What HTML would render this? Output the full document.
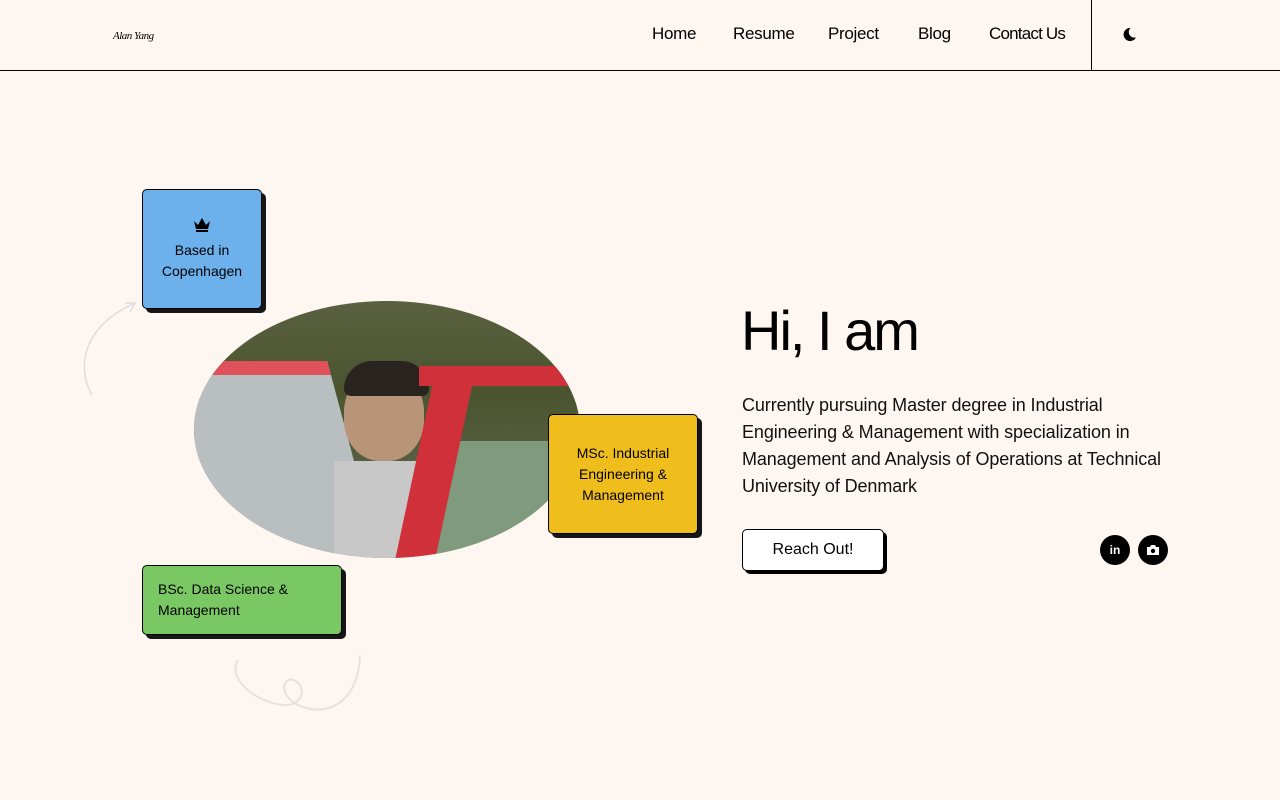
<!DOCTYPE html>
<html><head><meta charset="utf-8"><style>
*{margin:0;padding:0;box-sizing:border-box}
body{width:1280px;height:800px;background:#fdf6f1;font-family:"Liberation Sans",sans-serif;color:#000;position:relative;overflow:hidden}
.nav{position:absolute;top:0;left:0;width:1280px;height:71px;border-bottom:1px solid #000}
.logo{position:absolute;left:113px;top:30px;font-family:"Liberation Serif",serif;font-style:italic;font-size:11px;letter-spacing:-0.5px}
.nav a{position:absolute;top:24px;font-size:17px;color:#000;text-decoration:none;letter-spacing:-0.3px}
.vline{position:absolute;left:1091px;top:0;width:1px;height:70px;background:#000}
.card{position:absolute;border:1px solid #000;border-radius:5px;box-shadow:4px 4px 0 #161616;font-size:14px;line-height:21px;text-align:center}
h1{position:absolute;left:741px;top:298px;font-weight:400;font-size:56px;letter-spacing:-2px}
p.d{position:absolute;left:742px;top:392px;width:440px;font-size:18px;line-height:27px;color:#111;letter-spacing:-0.1px}
.btn{position:absolute;left:742px;top:529px;width:142px;height:42px;border:1px solid #000;border-radius:5px;box-shadow:3px 3px 0 #000;background:#fff;font-size:16px;text-align:center;line-height:40px}
.ic{position:absolute;top:535px;width:30px;height:30px;border-radius:50%;background:#000;color:#fff;font-size:12px;font-weight:bold;text-align:center;line-height:30px}
</style></head><body>
<div class="nav">
<div class="logo">Alan Yang</div>
<a style="left:652px">Home</a><a style="left:733px">Resume</a><a style="left:828px">Project</a><a style="left:918px">Blog</a><a style="left:989px;letter-spacing:-0.8px">Contact Us</a>
<div class="vline"></div>
<svg style="position:absolute;left:1122px;top:27px" width="15" height="15" viewBox="0 0 16 16"><path d="M9 1a7 7 0 1 0 6 10A6 6 0 0 1 9 1z" fill="#000"/></svg>
</div>
<svg style="position:absolute;left:80px;top:295px" width="70" height="110"><path d="M12 100C-5 70 5 30 55 8M45 8l10 0-5 9" stroke="#ddd" fill="none" stroke-width="1.5"/></svg>
<svg style="position:absolute;left:228px;top:655px" width="140" height="60"><path d="M10 5C0 20 20 45 55 50 75 52 80 30 65 25 55 22 50 40 70 50 95 62 130 52 132 0" stroke="#e6e2de" fill="none" stroke-width="2"/></svg>
<div style="position:absolute;left:194px;top:301px;width:386px;height:257px;border-radius:50%;overflow:hidden;background:linear-gradient(180deg,#5a6040 0%,#4a5530 35%,#6a6a55 100%)">
<div style="position:absolute;left:0;top:60px;width:160px;height:200px;background:#b9bfc0;border-top:14px solid #e0505a;transform:skewX(15deg)"></div>
<div style="position:absolute;left:150px;top:70px;width:80px;height:90px;border-radius:45%;background:#b89478"></div>
<div style="position:absolute;left:150px;top:60px;width:85px;height:35px;border-radius:40px 40px 10px 10px;background:#2a2420"></div>
<div style="position:absolute;left:140px;top:160px;width:120px;height:100px;background:#c8c8c8"></div>
<div style="position:absolute;left:240px;top:140px;width:150px;height:120px;background:#7f9a7c"></div>
<div style="position:absolute;left:220px;top:80px;width:40px;height:180px;background:#d0303a;transform:skewX(-12deg)"></div>
<div style="position:absolute;left:225px;top:65px;width:170px;height:20px;background:#d0303a"></div>
</div>
<div class="card" style="left:142px;top:189px;width:120px;height:120px;background:#6cb0ec;padding-top:27px">
<svg width="18" height="17" viewBox="0 0 18 17"><path d="M1 4l4 4 4-7 4 7 4-4-2 8H3z M3 13h12v2H3z" fill="#000"/></svg><br>Based in<br>Copenhagen</div>
<div class="card" style="left:548px;top:414px;width:150px;height:120px;background:#f0be1c;padding-top:28px">MSc. Industrial<br>Engineering &amp;<br>Management</div>
<div class="card" style="left:142px;top:565px;width:200px;height:70px;background:#7ac863;text-align:left;padding:13px 0 0 15px">BSc. Data Science &amp;<br>Management</div>
<h1>Hi, I am</h1>
<p class="d">Currently pursuing Master degree in Industrial Engineering &amp; Management with specialization in Management and Analysis of Operations at Technical University of Denmark</p>
<div class="btn">Reach Out!</div>
<div class="ic" style="left:1100px">in</div>
<div class="ic" style="left:1138px"><svg width="14" height="12" viewBox="0 0 14 12" style="margin-top:9px"><path d="M1 3h3l1-2h4l1 2h3v8H1z" fill="#fff"/><circle cx="7" cy="7" r="2.2" fill="#000"/></svg></div>
</body></html>
